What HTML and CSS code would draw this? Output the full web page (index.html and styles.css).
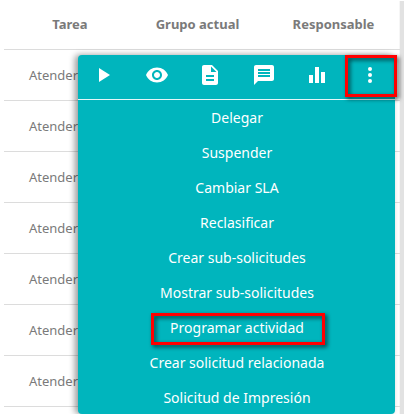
FILE: index.html
```
<!DOCTYPE html>
<html lang="es">
<head>
<meta charset="utf-8">
<title>Tareas</title>
<link rel="stylesheet" href="styles.css">
</head>
<body>
<main class="panel">
  <div class="row head"><span>Tarea</span><span>Grupo actual</span><span>Responsable</span></div>
  <div class="row">Atender</div>
  <div class="row">Atender</div>
  <div class="row">Atender</div>
  <div class="row">Atender</div>
  <div class="row">Atender</div>
  <div class="row">Atender</div>
  <div class="row">Atender</div>
</main>
<div class="popup">
  <div class="toolbar">
    <svg viewBox="0 0 24 24"><path d="M8 5v14l11-7z"/></svg>
    <svg viewBox="0 0 24 24"><path d="M12 4.5C7 4.500 2.730 7.610 1 12c1.730 4.390 6 7.500 11 7.500s9.270-3.110 11-7.500c-1.730-4.390-6-7.500-11-7.500zM12 17c-2.760 0-5-2.240-5-5s2.240-5 5-5 5 2.240 5 5-2.240 5-5 5zm0-8c-1.660 0-3 1.340-3 3s1.340 3 3 3 3-1.340 3-3-1.340-3-3-3z"/></svg>
    <svg viewBox="0 0 24 24"><path d="M14 2H6c-1.100 0-2 .9-2 2v16c0 1.100.9 2 2 2h12c1.100 0 2-.9 2-2V8l-6-6zm2 16H8v-2h8v2zm0-4H8v-2h8v2zm-3-5V3.500L18.500 9H13z"/></svg>
    <svg viewBox="0 0 24 24"><path d="M20 2H4c-1.100 0-2 .9-2 2v18l4-4h14c1.100 0 2-.9 2-2V4c0-1.100-.9-2-2-2zm-2 12H6v-2h12v2zm0-3H6V9h12v2zm0-3H6V6h12v2z"/></svg>
    <svg viewBox="0 0 24 24"><path d="M10 20h4V4h-4v16zm-6 0h4v-8H4v8zM16 9v11h4V9h-4z"/></svg>
    <svg viewBox="0 0 24 24"><circle cx="12" cy="6" r="2"/><circle cx="12" cy="12" r="2"/><circle cx="12" cy="18" r="2"/></svg>
  </div>
  <div class="menu">
    <span>Delegar</span>
    <span>Suspender</span>
    <span>Cambiar SLA</span>
    <span>Reclasificar</span>
    <span>Crear sub-solicitudes</span>
    <span>Mostrar sub-solicitudes</span>
    <span>Programar actividad</span>
    <span>Crear solicitud relacionada</span>
    <span>Solicitud de Impresión</span>
  </div>
</div>
<div class="mark mark-more"></div>
<div class="mark mark-schedule"></div>
</body>
</html>
```
FILE: styles.css
```
* { box-sizing: border-box; }
html { background: #fff; }
body {
  margin: 0;
  height: 414px;
  overflow: hidden;
  position: relative;
  clip-path: inset(0);
  color: #7a7a7a;
  font: 13px/18px "Noto Sans", sans-serif;
}
.panel {
  margin: 0 4px;
  border-top: 1px solid #fff;
  height: 414px;
  box-shadow: 4px 1px 0 #e2e2e2, inset -1px 0 0 #f6f6f6;
}
.row {
  height: 51px;
  padding: 16px 0 0 25px;
  border-bottom: 1px solid #dcdcdc;
}
.head {
  height: 49px;
  padding: 14px 0 0;
  display: grid;
  grid-template-columns: 132px 123px 149px;
  text-align: center;
  font-weight: bold;
}
.popup {
  position: absolute;
  left: 78px;
  top: 55px;
  width: 317px;
  height: 359px;
  border-radius: 4px;
  background: #00b5bd;
  color: #fff;
  box-shadow: -3px 0 6px rgba(0, 0, 0, .4);
}
.toolbar {
  height: 45px;
  padding-top: 8px;
  border-bottom: 1px solid #e4f7f8;
  display: flex;
  gap: 29.400px;
  padding-left: 13.400px;
}
.toolbar svg {
  width: 24px;
  height: 24px;
  flex: none;
  fill: #fff;
}
.menu {
  display: flex;
  flex-direction: column;
  padding-left: 1px;
  text-align: center;
  font-size: 14px;
  line-height: 35px;
}
.mark {
  position: absolute;
  border: 3px solid #f00;
  filter: drop-shadow(2px 2px 2px rgba(0, 0, 0, .7));
}
.mark-more {
  left: 345px;
  top: 55px;
  width: 52px;
  height: 42px;
}
.mark-schedule {
  left: 151px;
  top: 313px;
  width: 174px;
  height: 32px;
}
```
